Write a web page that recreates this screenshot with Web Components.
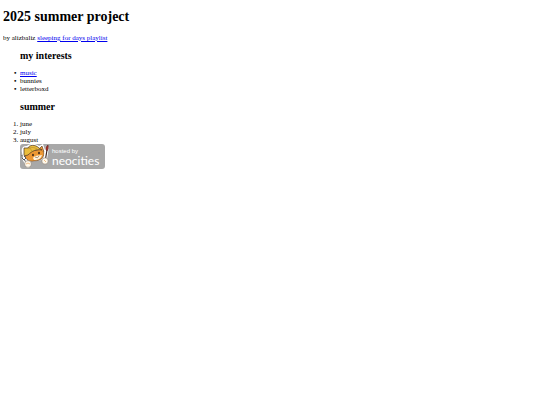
<!DOCTYPE html>
<html lang="en">
<head>
<meta charset="utf-8">
<title>2025 summer project</title>
<style>
body { margin: 9px 3px; background: #fff; color: #000; font: 7px/8px "Liberation Serif", serif; }
</style>
</head>
<body>
<summer-page></summer-page>
<script>
class PageIntro extends HTMLElement {
  constructor() {
    super();
    this.attachShadow({ mode: "open" }).innerHTML = `
      <style>
        :host { display: block; }
        h1 { margin: 0 0 9px; font-size: 14px; line-height: 16px; }
        p { margin: 0; }
        a { color: #0000ee; }
      </style>
      <h1><slot name="title"></slot></h1>
      <p>by <slot name="author"></slot> <a href="#playlist"><slot name="playlist"></slot></a></p>`;
  }
}
class TopicList extends HTMLElement {
  constructor() {
    super();
    const tag = this.hasAttribute("ordered") ? "ol" : "ul";
    const items = this.getAttribute("items").split(",").map(t => {
      const linked = t === this.getAttribute("link");
      return `<li>${linked ? `<a href="#${t}">${t}</a>` : t}</li>`;
    }).join("");
    this.attachShadow({ mode: "open" }).innerHTML = `
      <style>
        :host { display: block; padding-left: 17px; }
        h2 { margin: 0 0 8px; font-size: 10px; line-height: 11px; }
        ul, ol { margin: 0; padding: 0; }
        ul { list-style-type: "•\\2002"; }
        ul ::marker { font-weight: bold; }
        a { color: #0000ee; }
      </style>
      <h2><slot></slot></h2>
      <${tag}>${items}</${tag}>`;
  }
}
class HostBadge extends HTMLElement {
  constructor() {
    super();
    this.attachShadow({ mode: "open" }).innerHTML = `
      <style>
        :host { display: flex; padding-left: 17px; }
        a { display: inline-flex; align-items: center; box-sizing: border-box; height: 25px; padding-right: 6px;
            border-radius: 3px; background: #a8a8a8; color: #fff; text-decoration: none; }
        svg { width: 30px; height: 25px; margin-right: 2px; }
        .words { display: flex; flex-direction: column; }
        .small { font: 6px/7px "Liberation Sans", sans-serif; }
        .large { font: 12px/11px Lato, sans-serif; }
      </style>
      <a href="#neocities">
        <svg viewBox="0 0 30 25" aria-hidden="true">
          <path d="M2 9C1 4 3 2 7 2C9-.5 16-1 19 2L23 0L25 6C26 12 23 16 18 17L8 18C4 16 3 13 2 9Z" fill="#fff"/>
          <path d="M5 12L6 8L22 5L24 9C24 14 20 17 14 17C9 18 6 16 5 12Z" fill="#ed9833" stroke="#493322" stroke-width=".6"/>
          <path d="M19 5L22 2L24 8" fill="#ed9833" stroke="#493322" stroke-width=".6"/>
          <path d="M4 11L4 4L8 4C9 1 15 0 19 4L22 6C16 5 12 7 8 11L4 12Z" fill="#eabd3c" stroke="#493322" stroke-width=".7"/>
          <path d="M8 5C11 3 14 3 17 5M9 3L12 7" fill="none" stroke="#a0792a" stroke-width=".5"/>
          <path d="M13 14C15 11 18 12 22 11C21 15 18 16 14 16Z" fill="#fff2dc"/>
          <ellipse cx="13" cy="11" rx=".8" ry="1.2" fill="#281d18"/>
          <ellipse cx="19" cy="9" rx=".8" ry="1.2" fill="#281d18"/>
          <path d="M15 13Q18 15 19 12" fill="none" stroke="#493322" stroke-width=".5"/>
          <path d="M3 13L8 22M25 17L27 4" stroke="#fff" stroke-width="3.5" stroke-linecap="round"/>
          <path d="M2 11V14L4 16L6 14L4 12M4 15L8 22" fill="none" stroke="#555" stroke-width="1"/>
          <path d="M25 18L27 6" stroke="#3e2924" stroke-width="1.2"/>
          <path d="M26 6Q25 3 28 1Q29 5 27 7Z" fill="#aa312a" stroke="#512522" stroke-width=".5"/>
          <circle cx="8" cy="20" r="3.4" fill="#fff8ea" stroke="#75685f" stroke-width=".5"/>
          <circle cx="25" cy="17" r="3.2" fill="#fff8ea" stroke="#75685f" stroke-width=".5"/>
          <path d="M6 20Q8 18 10 20M24 16L26 18" fill="none" stroke="#e6a259" stroke-width=".7"/>
        </svg>
        <span class="words"><span class="small">hosted by</span><span class="large">neocities</span></span>
      </a>`;
  }
}
class SummerPage extends HTMLElement {
  constructor() {
    super();
    this.attachShadow({ mode: "open" }).innerHTML = `
      <style>
        :host { display: flex; flex-direction: column; gap: 8px; }
      </style>
      <page-intro><span slot="title">2025 summer project</span><span slot="author">alizbaliz</span><span slot="playlist">sleeping for days playlist</span></page-intro>
      <topic-list items="music,bunnies,letterboxd" link="music">my interests</topic-list>
      <div>
        <topic-list ordered items="june,july,august">summer</topic-list>
        <host-badge></host-badge>
      </div>`;
  }
}
customElements.define("page-intro", PageIntro);
customElements.define("topic-list", TopicList);
customElements.define("host-badge", HostBadge);
customElements.define("summer-page", SummerPage);
</script>
</body>
</html>
